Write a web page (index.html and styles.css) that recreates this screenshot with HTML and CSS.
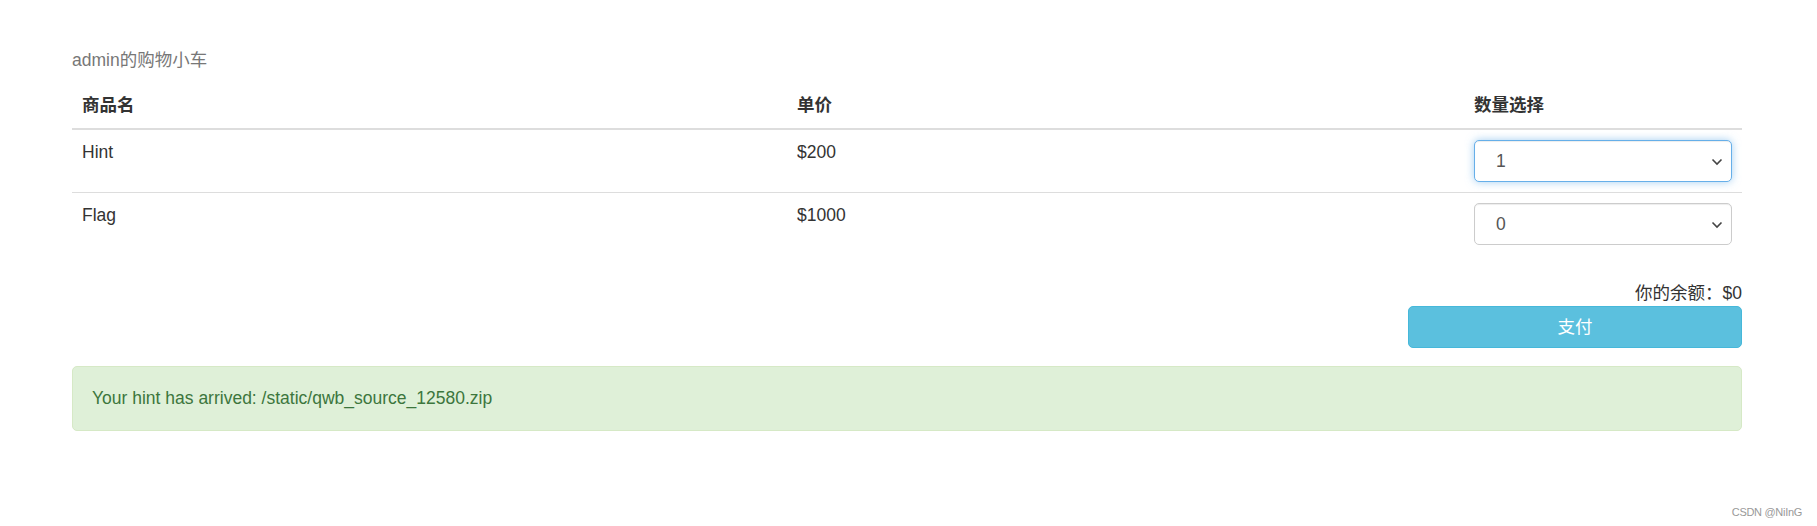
FILE: index.html
```html
<!DOCTYPE html>
<html lang="zh-CN">
<head>
    <meta charset="UTF-8">
    <meta name="viewport" content="width=device-width, initial-scale=1.0">
    <title>购物车</title>
    <link rel="stylesheet" href="styles.css">
</head>

<body>
    <div class="container">
        <form class="cart" action="#" method="post">
            <table class="table">
                <caption>admin的购物小车</caption>
                <thead>
                    <tr>
                        <th class="col-name">商品名</th>
                        <th class="col-price">单价</th>
                        <th class="col-num">数量选择</th>
                    </tr>
                </thead>
                <tbody>
                    <tr>
                        <td>Hint</td>
                        <td>$200</td>
                        <td>
                            <span class="select-wrap">
                                <select name="hint" class="form-control focus">
                                    <option>0</option>
                                    <option selected>1</option>
                                </select>
                                <svg class="caret" width="12" height="8" viewBox="0 0 12 8"><path d="M1.5 1.5 6 6l4.5-4.5" fill="none" stroke="#444" stroke-width="1.6"/></svg>
                            </span>
                        </td>
                    </tr>
                    <tr>
                        <td>Flag</td>
                        <td>$1000</td>
                        <td>
                            <span class="select-wrap">
                                <select name="flag" class="form-control">
                                    <option selected>0</option>
                                    <option>1</option>
                                </select>
                                <svg class="caret" width="12" height="8" viewBox="0 0 12 8"><path d="M1.5 1.5 6 6l4.5-4.5" fill="none" stroke="#444" stroke-width="1.6"/></svg>
                            </span>
                        </td>
                    </tr>
                </tbody>
            </table>

            <div class="pay">
                <p class="balance">你的余额：$0</p>
                <button type="submit" class="btn btn-info">支付</button>
            </div>
        </form>

        <div class="alert alert-success">Your hint has arrived: /static/qwb_source_12580.zip</div>
    </div>

    <div class="watermark">CSDN @NiInG</div>
</body>
</html>
```

FILE: styles.css
```css
html,
body {
    height: 100%;
}

body {
    margin: 0;
    font-family: "Liberation Sans", Arial, "Noto Sans CJK SC", sans-serif;
    font-size: 17.5px;
    line-height: 25px;
    color: #333;
    background: #fff;
    position: relative;
}

.container {
    width: 1670px;
    margin-left: 72px;
    padding-top: 38px;
}

.table {
    width: 100%;
    border-collapse: collapse;
    border-spacing: 0;
    margin-bottom: 26px;
}

.table caption {
    padding: 10px 0;
    color: #777;
    text-align: left;
}

.table th,
.table td {
    padding: 10px;
    text-align: left;
    vertical-align: top;
}

.table th {
    font-weight: bold;
    border-bottom: 2px solid #ddd;
}

.table tbody tr + tr td {
    border-top: 1px solid #ddd;
}

.col-name {
    width: 695px;
}

.col-price {
    width: 657px;
}

.select-wrap {
    position: relative;
    display: block;
}

.form-control {
    display: block;
    width: 100%;
    height: 42px;
    padding: 0 16px 0 21px;
    font: inherit;
    color: #555;
    background: #fff;
    border: 1px solid #ccc;
    border-radius: 5px;
    box-sizing: border-box;
    appearance: none;
    -webkit-appearance: none;
    box-shadow: inset 0 1px 1px rgba(0, 0, 0, 0.075);
}

.form-control.focus {
    border-color: #66afe9;
    outline: 0;
    box-shadow: inset 0 1px 1px rgba(0, 0, 0, 0.075), 0 0 8px rgba(102, 175, 233, 0.6);
}

.caret {
    position: absolute;
    right: 9px;
    top: 18px;
    pointer-events: none;
}

.pay {
    display: flex;
    flex-direction: column;
    align-items: flex-end;
}

.balance {
    margin: 0;
}

.btn {
    width: 334px;
    height: 42px;
    padding: 0;
    font: inherit;
    color: #fff;
    border-radius: 5px;
    cursor: pointer;
}

.btn-info {
    background: #5bc0de;
    border: 1px solid #46b8da;
}

.alert {
    margin-top: 18px;
    padding: 19px;
    border: 1px solid transparent;
    border-radius: 5px;
}

.alert-success {
    color: #3c763d;
    background: #dff0d8;
    border-color: #d6e9c6;
}

.watermark {
    position: absolute;
    right: 15px;
    bottom: 7px;
    font-size: 11px;
    line-height: 14px;
    letter-spacing: -0.3px;
    color: #999;
}
```
